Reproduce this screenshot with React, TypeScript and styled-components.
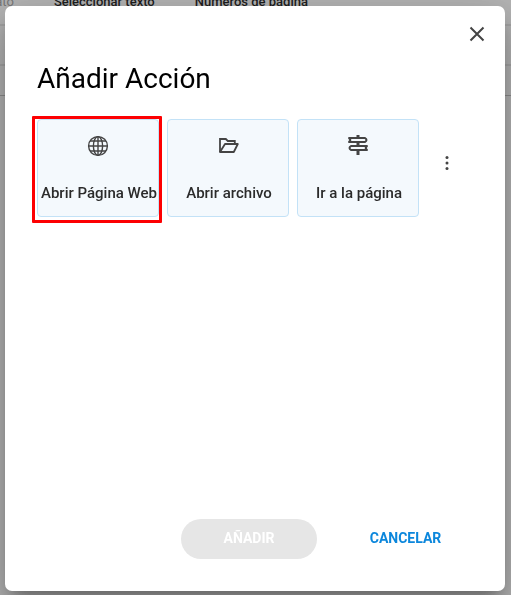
import React from 'react';
import styled, { createGlobalStyle } from 'styled-components';

const GlobalStyle = createGlobalStyle`
  * { box-sizing: border-box; }
  body { margin: 0; background: #b4b4b4; font-family: Roboto, "Liberation Sans", sans-serif; }
  button { font-family: inherit; cursor: pointer; }
`;

const Workspace = styled.div`
  height: 100vh;
  overflow: hidden;
  background: #b4b4b4;
  color: #111;
`;

const Tools = styled.div`
  display: flex;
  gap: 40px;
  height: 31px;
  margin-top: -7px;
  margin-left: -35px;
  font-size: 13px;
  line-height: 18px;
  white-space: nowrap;
`;

const Tool = styled.span<{ $muted?: boolean }>`
  color: ${(p) => (p.$muted ? '#777' : '#1d1d1d')};
  font-weight: ${(p) => (p.$muted ? 400 : 500)};
`;

const Bar = styled.div<{ $height: number; $thin?: boolean }>`
  height: ${(p) => p.$height}px;
  border-top: ${(p) => (p.$thin ? '1px solid #8c8c8c' : '2px solid #a5a5a5')};
`;

const Overlay = styled.div`
  position: fixed;
  inset: 0;
  display: flex;
  padding: 6px 6px 4px 5px;
`;

const Dialog = styled.section`
  flex: 1;
  display: flex;
  flex-direction: column;
  padding: 16px 16px 32px 32px;
  background: #fff;
  border-radius: 7px;
  box-shadow: 0 11px 15px -7px rgba(0, 0, 0, 0.3), 0 24px 38px 3px rgba(0, 0, 0, 0.16),
    0 9px 46px 8px rgba(0, 0, 0, 0.12);
`;

const IconButton = styled.button`
  display: flex;
  align-items: center;
  justify-content: center;
  width: 24px;
  height: 24px;
  padding: 0;
  border: 0;
  background: none;
  color: #444;
`;

const CloseButton = styled(IconButton)`
  align-self: flex-end;
`;

const Title = styled.h1`
  margin: 17px 0 24px;
  font-size: 28px;
  line-height: 32px;
  font-weight: 400;
  color: #000;
`;

const Actions = styled.div`
  display: flex;
  align-items: center;
  gap: 8px;
`;

const Card = styled.button<{ $marked?: boolean }>`
  position: relative;
  display: flex;
  flex-direction: column;
  align-items: center;
  gap: 26px;
  flex: 0 0 122px;
  height: 98px;
  padding: 15px 0 0;
  border: 1px solid #c3e2f7;
  border-radius: 4px;
  background: #f4f9fd;
  color: #444;

  &::after {
    content: '';
    display: ${(p) => (p.$marked ? 'block' : 'none')};
    position: absolute;
    inset: -4px -4px -7px -6px;
    border: 3px solid #fd0002;
    border-radius: 1px;
  }
`;

const CardLabel = styled.span`
  padding-left: 2px;
  font-size: 15px;
  line-height: 20px;
  font-weight: 500;
  color: #2b2b2b;
  white-space: nowrap;
`;

const MoreButton = styled(IconButton)`
  margin: 0 0 10px 8px;
`;

const Footer = styled.footer`
  display: flex;
  justify-content: flex-end;
  gap: 16px;
  margin-top: auto;
  padding-right: 11px;
`;

const FooterButton = styled.button<{ $filled?: boolean }>`
  width: ${(p) => (p.$filled ? 136 : 145)}px;
  height: 40px;
  padding: 0 0 2px;
  border: 0;
  border-radius: 20px;
  font-size: 14px;
  line-height: 20px;
  font-weight: 700;
  background: ${(p) => (p.$filled ? '#e6e6e6' : 'transparent')};
  color: ${(p) => (p.$filled ? '#fff' : '#0c87dc')};
`;

const Glyph = ({ children }: { children: React.ReactNode }) => (
  <svg width="22" height="22" viewBox="0 0 22 22" fill="none" stroke="currentColor" aria-hidden="true">
    {children}
  </svg>
);

const GlobeIcon = () => (
  <Glyph>
    <g strokeWidth="1.4">
      <circle cx="11" cy="11" r="9.4" />
      <ellipse cx="11" cy="11" rx="4.6" ry="9.4" />
      <path d="M11 1.6v18.8M1.6 11h18.8M3.2 6h15.6M3.2 16h15.6" />
    </g>
  </Glyph>
);

const FolderIcon = () => (
  <Glyph>
    <g strokeWidth="1.8">
      <path d="M3 17V4h5.8l2 2h7v3" />
      <path d="M3 17h13.8l4-8H8L3 17z" strokeLinejoin="round" />
    </g>
  </Glyph>
);

const SignpostIcon = () => (
  <Glyph>
    <g strokeWidth="2">
      <path d="M2 3h16q3 2 0 4H2l1.4-2z" strokeLinejoin="round" />
      <path d="M20 11H4q-3 2 0 4h16l-1.4-2z" strokeLinejoin="round" />
      <path d="M11 0v3M11 7v4M11 15v5" strokeWidth="3" />
    </g>
  </Glyph>
);

const actions = [
  { label: 'Abrir Página Web', icon: <GlobeIcon />, marked: true },
  { label: 'Abrir archivo', icon: <FolderIcon /> },
  { label: 'Ir a la página', icon: <SignpostIcon /> },
];

export default function App() {
  return (
    <>
      <GlobalStyle />
      <Workspace aria-hidden="true">
        <Tools>
          <Tool $muted>Formato</Tool>
          <Tool>Seleccionar texto</Tool>
          <Tool>Números de página</Tool>
        </Tools>
        <Bar $height={40} />
        <Bar $height={31} />
        <Bar $height={500} $thin />
      </Workspace>
      <Overlay>
        <Dialog role="dialog" aria-modal="true" aria-labelledby="dialog-title">
          <CloseButton aria-label="Cerrar">
            <svg width="24" height="24" viewBox="0 0 24 24" stroke="currentColor" strokeWidth="2" aria-hidden="true">
              <path d="M5.5 5.5l13 13M18.5 5.5l-13 13" />
            </svg>
          </CloseButton>
          <Title id="dialog-title">Añadir Acción</Title>
          <Actions>
            {actions.map((a) => (
              <Card key={a.label} $marked={a.marked}>
                {a.icon}
                <CardLabel>{a.label}</CardLabel>
              </Card>
            ))}
            <MoreButton aria-label="Más acciones">
              <svg width="24" height="24" viewBox="0 0 24 24" fill="currentColor" aria-hidden="true">
                <circle cx="12" cy="6.5" r="1.5" />
                <circle cx="12" cy="12" r="1.5" />
                <circle cx="12" cy="17.5" r="1.5" />
              </svg>
            </MoreButton>
          </Actions>
          <Footer>
            <FooterButton $filled disabled>AÑADIR</FooterButton>
            <FooterButton>CANCELAR</FooterButton>
          </Footer>
        </Dialog>
      </Overlay>
    </>
  );
}
